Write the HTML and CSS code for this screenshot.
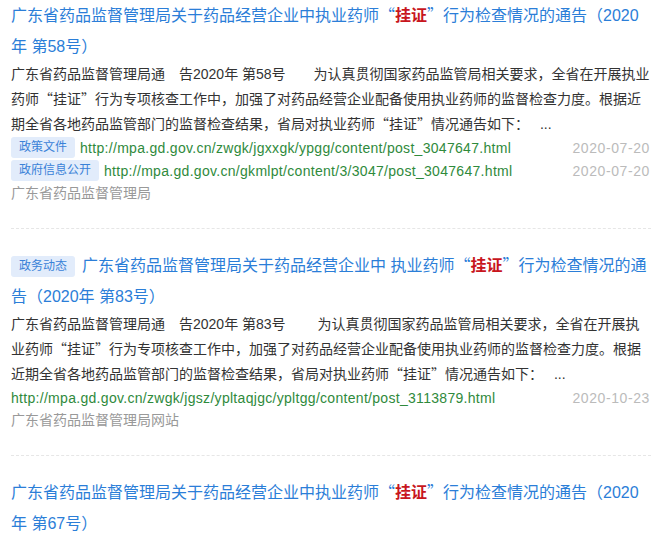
FILE: index.html
```html
<!DOCTYPE html>
<html>
<head>
    <meta charset="utf-8">
    <title>搜索结果</title>
    <link rel="stylesheet" href="styles.css">
</head>
<body>
    <div class="result-list">
        <div class="result-item first">
            <div class="result-title">广东省药品监督管理局关于药品经营企业中执业药师<q>“</q><em>挂证</em><q>”</q>行为检查情况的通告（2020年 第58号）</div>
            <div class="result-summary">广东省药品监督管理局通　告2020年 第58号　　为认真贯彻国家药品监管局相关要求，全省在开展执业药师<q>“</q>挂证<q>”</q>行为专项核查工作中，加强了对药品经营企业配备使用执业药师的监督检查力度。根据近期全省各地药品监管部门的监督检查结果，省局对执业药师<q>“</q>挂证<q>”</q>情况通告如下：　 ...</div>
            <div class="result-link">
                <span class="tag">政策文件</span>
                <span class="url">http://mpa.gd.gov.cn/zwgk/jgxxgk/ypgg/content/post_3047647.html</span>
                <span class="date">2020-07-20</span>
            </div>
            <div class="result-link">
                <span class="tag">政府信息公开</span>
                <span class="url">http://mpa.gd.gov.cn/gkmlpt/content/3/3047/post_3047647.html</span>
                <span class="date">2020-07-20</span>
            </div>
            <div class="result-source">广东省药品监督管理局</div>
        </div>

        <div class="result-item">
            <div class="result-title"><span class="tag">政务动态</span>广东省药品监督管理局关于药品经营企业中 执业药师<q>“</q><em>挂证</em><q>”</q>行为检查情况的通告（2020年 第83号）</div>
            <div class="result-summary">广东省药品监督管理局通　告2020年 第83号　　 为认真贯彻国家药品监管局相关要求，全省在开展执业药师<q>“</q>挂证<q>”</q>行为专项核查工作中，加强了对药品经营企业配备使用执业药师的监督检查力度。根据近期全省各地药品监管部门的监督检查结果，省局对执业药师<q>“</q>挂证<q>”</q>情况通告如下：　 ...</div>
            <div class="result-link">
                <span class="url">http://mpa.gd.gov.cn/zwgk/jgsz/ypltaqjgc/ypltgg/content/post_3113879.html</span>
                <span class="date">2020-10-23</span>
            </div>
            <div class="result-source">广东省药品监督管理局网站</div>
        </div>

        <div class="result-item">
            <div class="result-title">广东省药品监督管理局关于药品经营企业中执业药师<q>“</q><em>挂证</em><q>”</q>行为检查情况的通告（2020年 第67号）</div>
        </div>
    </div>
</body>
</html>
```

FILE: styles.css
```css
body {
    margin: 0;
    padding: 0;
    background: #fff;
    font-family: "Liberation Sans", "Noto Sans CJK SC", sans-serif;
    color: #333;
    overflow: hidden;
}

/* 中文引号用 CJK 字体，保持全角宽度 */
q {
    font-family: "Noto Sans CJK SC", sans-serif;
}

q::before,
q::after {
    content: none;
}

.result-list {
    padding: 0 12px 0 11px;
    margin-top: -1px;
}

.result-item {
    padding: 20px 0 23px;
    border-bottom: 1px dashed #e6e6e6;
}

.result-item.first {
    padding-top: 0;
}

.result-title {
    font-size: 16px;
    line-height: 31px;
    color: #2b7ed8;
}

.result-title em {
    font-style: normal;
    font-weight: bold;
    color: #c8161d;
}

.result-title .tag {
    margin-right: 7px;
    vertical-align: 1px;
}

.result-summary {
    font-size: 14px;
    line-height: 24px;
    color: #333;
}

.result-link {
    display: flex;
    align-items: center;
    height: 23px;
    font-size: 14px;
}

.tag {
    display: inline-block;
    height: 21px;
    line-height: 21px;
    padding: 0 8px;
    background: #e2ecfb;
    color: #3a82d8;
    font-size: 12px;
    border-radius: 3px;
}

.url {
    color: #2f8a3c;
    margin-left: 5px;
    letter-spacing: 0.3px;
    white-space: nowrap;
}

.result-link .url:first-child {
    margin-left: 0;
}

.date {
    margin-left: auto;
    margin-right: 1px;
    color: #bbb;
    letter-spacing: 0.6px;
}

.result-source {
    font-size: 14px;
    line-height: 23px;
    color: #999;
}
```
